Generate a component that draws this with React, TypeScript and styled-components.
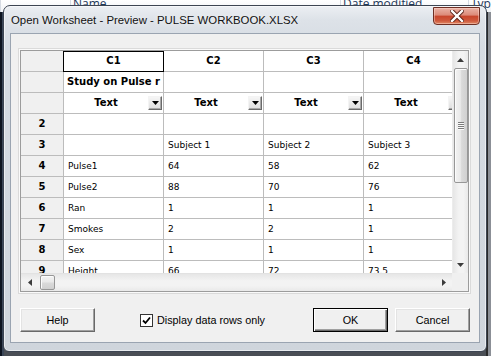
import React from "react";
import styled, { createGlobalStyle } from "styled-components";

const Global = createGlobalStyle`
  html, body { margin: 0; padding: 0; }
  body { font-family: "Liberation Sans", Arial, sans-serif; background: #2b2f35; }
  * { box-sizing: border-box; }
`;

const Desktop = styled.div`
  position: relative;
  width: 491px;
  height: 356px;
  overflow: hidden;
  background: #2b2f35;
`;

const Explorer = styled.div`
  display: flex;
  flex-direction: column;
  width: 100%;
  height: 100%;
`;

const ExplorerHeader = styled.div`
  display: flex;
  height: 12px;
  background: linear-gradient(#ffffff, #f1f3f6);
  font-family: "Open Sans", "Liberation Sans", sans-serif;
  font-size: 12px;
  line-height: 8px;
  color: #1e395b;
  overflow: hidden;
`;

const HeadCol = styled.div<{ $w: number }>`
  width: ${(p) => p.$w}px;
  flex: none;
  border-left: 1px solid #d6dbe3;
  padding-left: 2px;
  white-space: nowrap;
`;

const ExplorerBody = styled.div`
  flex: 1;
  background: linear-gradient(90deg, #0d1420 0 2px, #3a4658 2px 4px, #4a4e55 4px 486px, #2a2a2a 486px 488px, #8b8f96 488px);
`;

const Dialog = styled.div`
  position: absolute;
  left: 3px;
  top: 5px;
  width: 484px;
  height: 347px;
  border: 1px solid #3d4552;
  border-radius: 7px 7px 6px 6px;
  background: linear-gradient(180deg, #eceff3 0px, #dde2e8 14px, #d6dce3 40px, #cfd5dc 100%);
  box-shadow: inset 0 0 0 1px rgba(255, 255, 255, 0.55);
  padding: 0 6px 8px 6px;
  display: flex;
  flex-direction: column;
`;

const TitleBar = styled.div`
  height: 27px;
  flex: none;
  display: flex;
  align-items: center;
  padding-left: 1px;
`;

const Title = styled.span`
  font-family: "Liberation Sans", Arial, sans-serif;
  font-size: 11.4px;
  color: #111;
  white-space: nowrap;
  text-shadow: 0 0 6px rgba(255, 255, 255, 0.9);
`;

const CloseButton = styled.div`
  margin-left: auto;
  align-self: flex-start;
  margin-top: 1px;
  width: 47px;
  height: 18px;
  border: 1px solid #6e2f24;
  border-radius: 0 0 4px 4px;
  background: linear-gradient(180deg, #eab3a6 0%, #dc8a78 45%, #c8452c 50%, #cf5a3d 80%, #e08a66 100%);
  box-shadow: inset 0 0 0 1px rgba(255, 220, 210, 0.45);
  display: flex;
  align-items: center;
  justify-content: center;
`;

const Client = styled.div`
  flex: 1;
  background: #f0f0f0;
  border: 1px solid #9aa4b1;
  display: flex;
  flex-direction: column;
  padding: 16px 9px 0 9px;
`;

const GridFrame = styled.div`
  width: 449px;
  height: 242px;
  border: 1px solid #9c9c9c;
  box-shadow: 0 0 0 1px #fafafa, 0 0 0 2px #dadada;
  display: grid;
  grid-template-columns: 431px 16px;
  grid-template-rows: 222px 18px;
  background: #ffffff;
`;

const Viewport = styled.div`
  overflow: hidden;
  background: #ffffff;
`;

const Sheet = styled.div`
  display: grid;
  grid-template-columns: 43px repeat(4, 100px);
  grid-auto-rows: 21px;
  width: 443px;
  font-family: "DejaVu Sans", Tahoma, sans-serif;
  font-size: 9px;
  color: #000;
`;

const Cell = styled.div<{ $kind?: "rowhead" | "head" | "data" | "type"; $selected?: boolean }>`
  border-right: 1px solid #bcbcbc;
  border-bottom: 1px solid #bcbcbc;
  background: ${(p) => (p.$kind === "rowhead" ? "#f0f0f0" : "#ffffff")};
  font-weight: ${(p) => (p.$kind === "data" ? "normal" : "bold")};
  font-size: ${(p) => (p.$kind === "data" ? "9px" : "10px")};
  text-align: ${(p) => (p.$kind === "data" ? "left" : "center")};
  padding-left: ${(p) => (p.$kind === "data" ? "4px" : "0")};
  line-height: 20px;
  white-space: nowrap;
  overflow: hidden;
  display: ${(p) => (p.$kind === "type" ? "flex" : "block")};
  align-items: center;
  ${(p) =>
    p.$selected
      ? `border-right-color: #000; border-bottom-color: #000; box-shadow: -1px 0 0 #000, inset 0 1px 0 #000;`
      : ""}
`;

const TypeLabel = styled.span`
  flex: 1;
  text-align: center;
`;

const DropButton = styled.span`
  flex: none;
  width: 14px;
  height: 14px;
  margin-right: 1px;
  border: 1px solid;
  border-color: #f4f4f4 #6a6a6a #6a6a6a #f4f4f4;
  background: linear-gradient(#f6f6f6, #dedede);
  box-shadow: inset -1px -1px 0 #a8a8a8;
  display: flex;
  align-items: center;
  justify-content: center;
`;

const VScroll = styled.div`
  display: flex;
  flex-direction: column;
  align-items: center;
  background: linear-gradient(90deg, #e6e6e6, #f3f3f3 40%, #f3f3f3 70%, #e9e9e9);
  border-left: 1px solid #ececec;
`;

const HScroll = styled.div`
  display: flex;
  align-items: center;
  background: linear-gradient(180deg, #e6e6e6, #f3f3f3 40%, #f3f3f3 70%, #e9e9e9);
  border-top: 1px solid #e2e2e2;
`;

const Corner = styled.div`
  background: #f0f0f0;
`;

const Arrow = styled.div<{ $dir: "up" | "down" | "left" | "right" }>`
  flex: none;
  width: ${(p) => (p.$dir === "up" || p.$dir === "down" ? "16px" : "17px")};
  height: 17px;
  display: flex;
  align-items: center;
  justify-content: center;
`;

const VThumb = styled.div`
  flex: none;
  width: 14px;
  height: 115px;
  border: 1px solid #979797;
  border-radius: 2px;
  background: linear-gradient(90deg, #f3f3f3, #e9e9e9 45%, #dadada 55%, #d0d0d0);
  box-shadow: inset 1px 1px 0 #fcfcfc;
  display: flex;
  flex-direction: column;
  align-items: center;
  justify-content: center;
  gap: 1px;
`;

const HThumb = styled.div`
  flex: none;
  width: 15px;
  height: 15px;
  margin-left: 2px;
  border: 1px solid #979797;
  border-radius: 2px;
  background: linear-gradient(180deg, #f3f3f3, #e9e9e9 45%, #dadada 55%, #d0d0d0);
  box-shadow: inset 1px 1px 0 #fcfcfc;
`;

const Grip = styled.span`
  width: 6px;
  height: 1px;
  background: #7c7c7c;
  box-shadow: 0 1px 0 #fafafa;
`;

const Spacer = styled.div`
  flex: 1;
`;

const ButtonRow = styled.div`
  display: flex;
  align-items: center;
  margin-top: 16px;
  font-family: "Liberation Sans", Arial, sans-serif;
  font-size: 10.8px;
  color: #000;
`;

const Button = styled.div<{ $default?: boolean }>`
  width: 75px;
  height: 24px;
  display: flex;
  align-items: center;
  justify-content: center;
  background: #f0f0f0;
  border: 1px solid;
  border-color: ${(p) => (p.$default ? "#000" : "#ffffff #696969 #696969 #ffffff")};
  box-shadow: ${(p) =>
    p.$default
      ? "inset 1px 1px 0 #ffffff, inset -1px -1px 0 #696969, inset -2px -2px 0 #a0a0a0"
      : "inset -1px -1px 0 #a0a0a0, inset 1px 1px 0 #e3e3e3"};
`;

const CheckGroup = styled.label`
  display: flex;
  align-items: center;
  gap: 4px;
  margin-left: 45px;
`;

const CheckBox = styled.span`
  width: 13px;
  height: 13px;
  border: 1px solid #333;
  background: #fff;
  display: flex;
  align-items: center;
  justify-content: center;
`;

const RightButtons = styled.div`
  margin-left: auto;
  display: flex;
  gap: 7px;
`;

const Tri = ({ dir, color = "#111" }: { dir: "up" | "down" | "left" | "right"; color?: string }) => {
  const pts: Record<string, string> = {
    up: "0,4 7,4 3.5,0",
    down: "0,0 7,0 3.5,4",
    left: "4,0 4,7 0,3.5",
    right: "0,0 0,7 4,3.5",
  };
  const v = dir === "up" || dir === "down";
  return (
    <svg width={v ? 7 : 4} height={v ? 4 : 7} viewBox={v ? "0 0 7 4" : "0 0 4 7"}>
      <polygon points={pts[dir]} fill={color} />
    </svg>
  );
};

const dataRows: { num: string; cells: string[] }[] = [
  { num: "2", cells: ["", "", "", ""] },
  { num: "3", cells: ["", "Subject 1", "Subject 2", "Subject 3"] },
  { num: "4", cells: ["Pulse1", "64", "58", "62"] },
  { num: "5", cells: ["Pulse2", "88", "70", "76"] },
  { num: "6", cells: ["Ran", "1", "1", "1"] },
  { num: "7", cells: ["Smokes", "2", "2", "1"] },
  { num: "8", cells: ["Sex", "1", "1", "1"] },
  { num: "9", cells: ["Height", "66", "72", "73.5"] },
];

const cols = ["C1", "C2", "C3", "C4"];
const names = ["Study on Pulse r", "", "", ""];

export default function App() {
  return (
    <>
      <Global />
      <Desktop>
        <Explorer>
          <ExplorerHeader>
            <HeadCol $w={70}> </HeadCol>
            <HeadCol $w={270}>Name</HeadCol>
            <HeadCol $w={128}>Date modified</HeadCol>
            <HeadCol $w={40}>Type</HeadCol>
          </ExplorerHeader>
          <ExplorerBody />
        </Explorer>

        <Dialog>
          <TitleBar>
            <Title>Open Worksheet - Preview - PULSE WORKBOOK.XLSX</Title>
            <CloseButton>
              <svg width="14" height="12" viewBox="0 0 14 12">
                <path
                  d="M2 1 L12 11 M12 1 L2 11"
                  stroke="#5a2218"
                  strokeWidth="4.2"
                  strokeLinecap="square"
                />
                <path
                  d="M2 1 L12 11 M12 1 L2 11"
                  stroke="#ffffff"
                  strokeWidth="2.4"
                  strokeLinecap="square"
                />
              </svg>
            </CloseButton>
          </TitleBar>

          <Client>
            <GridFrame>
              <Viewport>
                <Sheet>
                  <Cell $kind="rowhead" />
                  {cols.map((c, i) => (
                    <Cell key={c} $kind="head" $selected={i === 0}>
                      {c}
                    </Cell>
                  ))}
                  <Cell $kind="rowhead" />
                  {names.map((n, i) => (
                    <Cell key={"n" + i} $kind="head">
                      {n}
                    </Cell>
                  ))}
                  <Cell $kind="rowhead" />
                  {cols.map((c) => (
                    <Cell key={"t" + c} $kind="type">
                      <TypeLabel>Text</TypeLabel>
                      <DropButton>
                        <Tri dir="down" color="#000" />
                      </DropButton>
                    </Cell>
                  ))}
                  {dataRows.map((r) => (
                    <React.Fragment key={r.num}>
                      <Cell $kind="rowhead">{r.num}</Cell>
                      {r.cells.map((v, i) => (
                        <Cell key={i} $kind="data">
                          {v}
                        </Cell>
                      ))}
                    </React.Fragment>
                  ))}
                </Sheet>
              </Viewport>
              <VScroll>
                <Arrow $dir="up">
                  <Tri dir="up" color="#3c3c3c" />
                </Arrow>
                <VThumb>
                  <Grip />
                  <Grip />
                  <Grip />
                  <Grip />
                </VThumb>
                <Spacer />
                <Arrow $dir="down">
                  <Tri dir="down" color="#3c3c3c" />
                </Arrow>
              </VScroll>
              <HScroll>
                <Arrow $dir="left">
                  <Tri dir="left" color="#3c3c3c" />
                </Arrow>
                <HThumb />
                <Spacer />
                <Arrow $dir="right">
                  <Tri dir="right" color="#3c3c3c" />
                </Arrow>
              </HScroll>
              <Corner />
            </GridFrame>

            <ButtonRow>
              <Button>Help</Button>
              <CheckGroup>
                <CheckBox>
                  <svg width="9" height="9" viewBox="0 0 9 9">
                    <path d="M1 4.5 L3.5 7 L8 1.5" stroke="#000" strokeWidth="1.8" fill="none" />
                  </svg>
                </CheckBox>
                <span>Display data rows only</span>
              </CheckGroup>
              <RightButtons>
                <Button $default>OK</Button>
                <Button>Cancel</Button>
              </RightButtons>
            </ButtonRow>
          </Client>
        </Dialog>
      </Desktop>
    </>
  );
}
